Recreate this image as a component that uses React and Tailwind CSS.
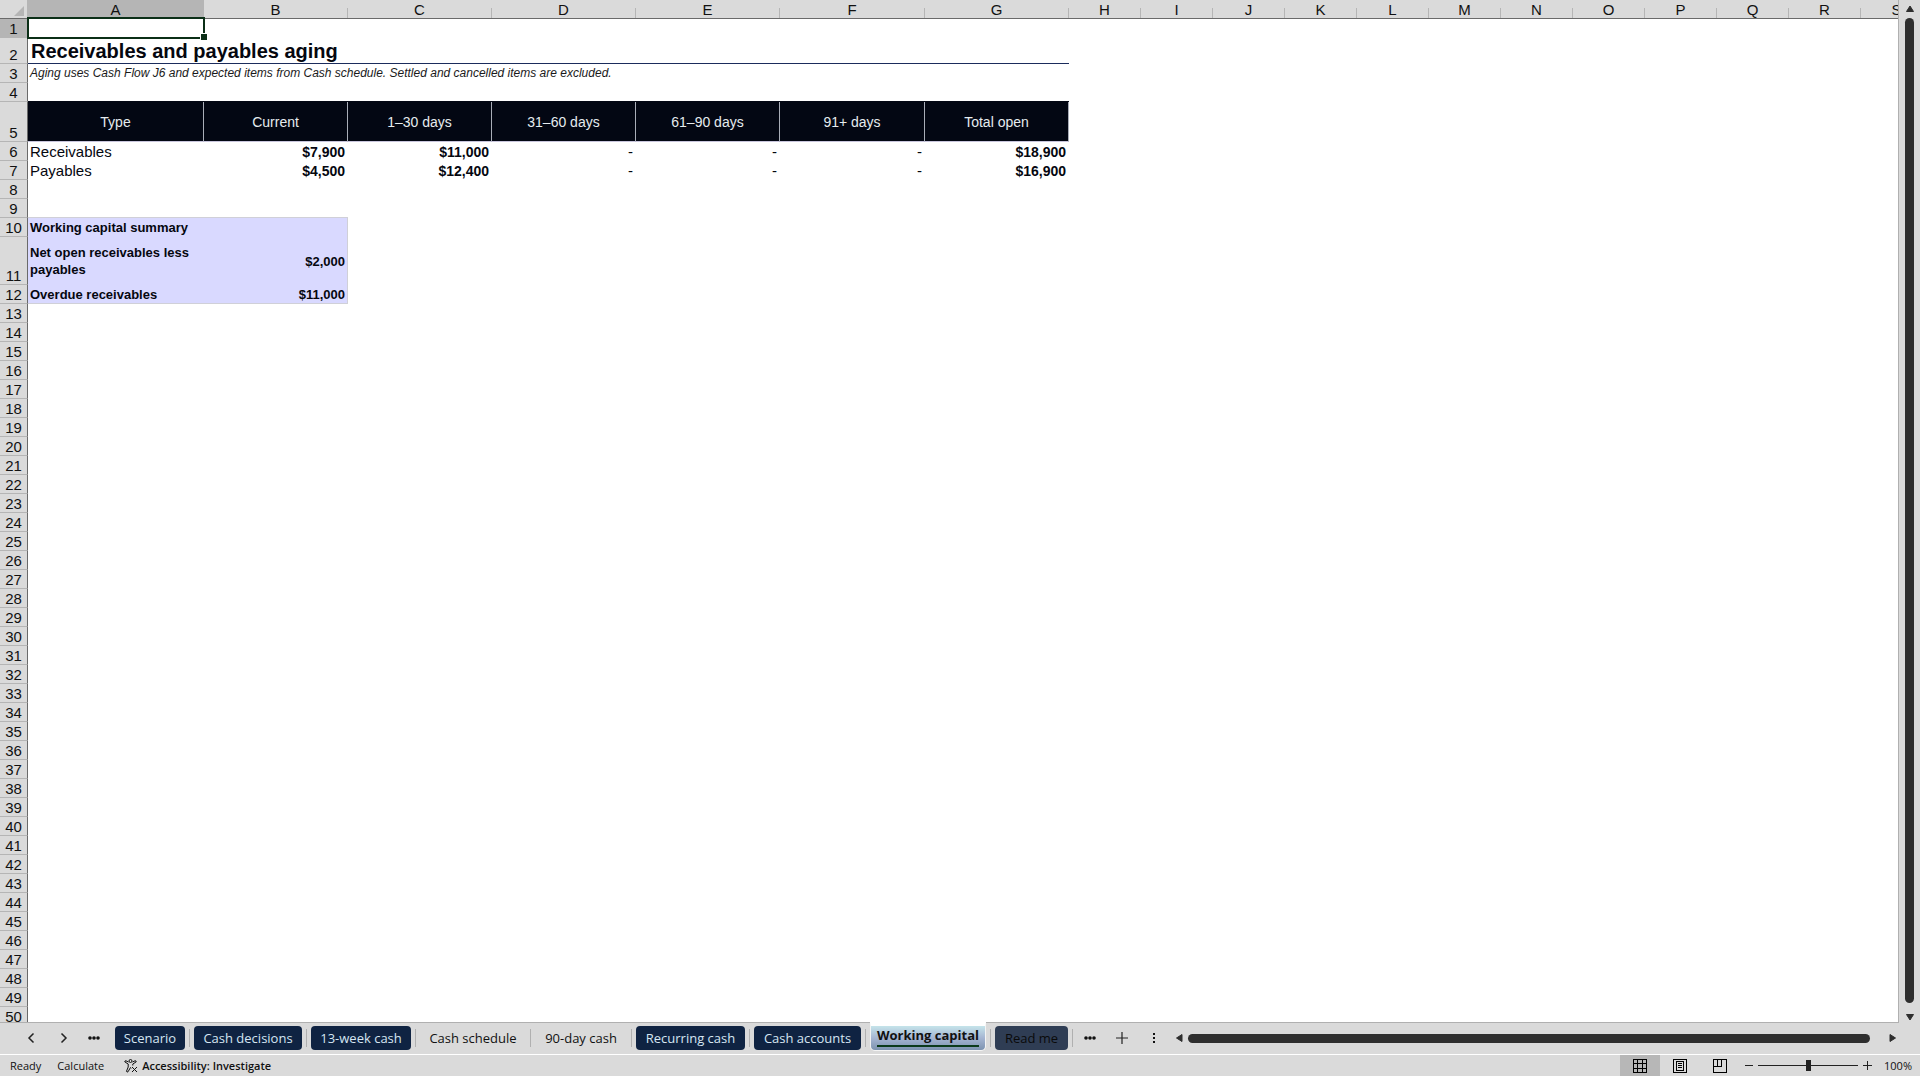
const rowHeaders = [];
for (let n = 13; n <= 50; n++) rowHeaders.push(n);

const columns = ["A", "B", "C", "D", "E", "F", "G", "H", "I", "J", "K", "L", "M", "N", "O", "P", "Q", "R", "S"];
const buckets = ["Type", "Current", "1–30 days", "31–60 days", "61–90 days", "91+ days", "Total open"];
const aging = [
  { n: 6, type: "Receivables", values: ["$7,900", "$11,000", "-", "-", "-", "$18,900"] },
  { n: 7, type: "Payables", values: ["$4,500", "$12,400", "-", "-", "-", "$16,900"] },
];

function RowHead({ n, active }) {
  return (
    <th
      scope="row"
      className={
        "overflow-hidden border-r border-b border-r-[#6a6a6a] border-b-[#b5b5b5] p-0 text-center align-bottom text-[15px] leading-4 font-normal text-[#111] " +
        (active ? "bg-[#b5b5b5]" : "bg-[#dadada]")
      }
    >
      {n}
    </th>
  );
}

function Sheet() {
  return (
    <div className="min-w-0 flex-1 overflow-hidden border-r border-b border-[#b0b0b0] bg-white">
      <table className="w-[1933px] table-fixed border-separate border-spacing-0 font-['Liberation_Sans',Arial,sans-serif] text-[#05070f]">
        <colgroup>
          <col className="w-7" />
          <col className="w-44" />
          <col span={4} className="w-36" />
          <col className="w-[145px]" />
          <col className="w-36" />
          <col span={12} className="w-[72px]" />
        </colgroup>
        <thead>
          <tr className="h-[19px] bg-[#dadada]">
            <th className="border-r border-b border-r-[#b5b5b5] border-b-[#6a6a6a] p-0" aria-label="Select all">
              <svg viewBox="0 0 10 10" className="mt-1 mr-[3px] ml-auto size-[10px]" fill="#b5b5b5">
                <path d="M10 0V10H0Z" />
              </svg>
            </th>
            {columns.map((c) => (
              <th
                key={c}
                scope="col"
                className={
                  "h-[19px] border-b border-[#6a6a6a] p-0 text-[15px] leading-4 font-normal text-[#111] " +
                  (c === "A" ? "bg-[#b5b5b5]" : "")
                }
              >
                <div className="flex h-[18px] items-end">
                  <span className="flex-1 text-center">{c}</span>
                  <span className="h-[10px] w-px bg-[#b5b5b5]" />
                </div>
              </th>
            ))}
          </tr>
        </thead>
        <tbody>
          <tr className="h-[19px]">
            <RowHead n={1} active />
            <td className="relative p-0">
              <div className="absolute -inset-x-px -top-0.5 -bottom-px border-2 border-[#0b2f17]">
                <span className="absolute -right-1 -bottom-[3px] size-[7px] border-t border-l border-white bg-[#0b2f17]" />
              </div>
            </td>
            <td colSpan={18} />
          </tr>
          <tr className="h-[26px]">
            <RowHead n={2} />
            <td colSpan={7} className="border-b border-[#1b2c5c] px-[3px] py-0 text-xl leading-6 font-bold">
              Receivables and payables aging
            </td>
            <td colSpan={12} />
          </tr>
          <tr className="h-[19px]">
            <RowHead n={3} />
            <td colSpan={7} className="px-[2px] py-0 align-top text-xs leading-[18px] text-[#1a1a1a] italic">
              Aging uses Cash Flow J6 and expected items from Cash schedule. Settled and cancelled items are excluded.
            </td>
            <td colSpan={12} />
          </tr>
          <tr className="h-[19px]">
            <RowHead n={4} />
            <td colSpan={7} className="border-b border-[#030713]" />
            <td colSpan={12} />
          </tr>
          <tr className="h-10">
            <RowHead n={5} />
            {buckets.map((b) => (
              <th
                key={b}
                scope="col"
                className="border-r border-b border-r-[#a9adb8] border-b-[#c9c6dd] bg-[#030713] p-0 text-sm leading-4 font-normal text-[#e6ecef]"
              >
                {b}
              </th>
            ))}
            <td colSpan={12} />
          </tr>
          {aging.map((r) => (
            <tr key={r.n} className="h-[19px]">
              <RowHead n={r.n} />
              <td className="px-[2px] py-0 text-[15px] leading-[18px]">{r.type}</td>
              {r.values.map((v, i) => (
                <td
                  key={i}
                  className={
                    "py-0 pr-[3px] pl-0 text-right " +
                    (v === "-" ? "text-[15px] leading-[18px]" : "text-sm leading-[18px] font-bold")
                  }
                >
                  {v}
                </td>
              ))}
              <td colSpan={12} />
            </tr>
          ))}
          <tr className="h-[19px]">
            <RowHead n={8} />
            <td colSpan={19} />
          </tr>
          <tr className="h-[19px]">
            <RowHead n={9} />
            <td colSpan={2} className="border-b border-[#d0d0d8]" />
            <td colSpan={17} />
          </tr>
          <tr className="h-[19px] text-[13px] leading-[17px] font-bold">
            <RowHead n={10} />
            <td className="bg-[#d9d9ff] px-[2px] py-0">Working capital summary</td>
            <td className="border-r border-[#d0d0d8] bg-[#d9d9ff]" />
            <td colSpan={17} />
          </tr>
          <tr className="h-12 text-[13px] leading-[17px] font-bold">
            <RowHead n={11} />
            <td className="bg-[#d9d9ff] px-[2px] py-0">Net open receivables less payables</td>
            <td className="border-r border-[#d0d0d8] bg-[#d9d9ff] px-[2px] py-0 text-right">$2,000</td>
            <td colSpan={17} />
          </tr>
          <tr className="h-[19px] text-[13px] leading-[17px] font-bold">
            <RowHead n={12} />
            <td className="border-b border-[#d0d0d8] bg-[#d9d9ff] px-[2px] py-0">Overdue receivables</td>
            <td className="border-r border-b border-[#d0d0d8] bg-[#d9d9ff] px-[2px] py-0 text-right">$11,000</td>
            <td colSpan={17} />
          </tr>
          {rowHeaders.map((n) => (
            <tr key={n} className="h-[19px]">
              <RowHead n={n} />
              <td colSpan={19} />
            </tr>
          ))}
        </tbody>
      </table>
    </div>
  );
}

function Arrow({ d, label }) {
  return (
    <button aria-label={label} className="flex shrink-0 items-center justify-center">
      <svg viewBox="0 0 10 10" className="size-[10px]" fill="#2e2e2e" stroke="#2e2e2e" strokeLinejoin="round">
        <path d={d} />
      </svg>
    </button>
  );
}

function Dots({ vertical }) {
  return (
    <svg viewBox="0 0 12 12" className="size-3" fill="#111">
      {vertical ? (
        <path d="M5 1h2v2H5zM5 5h2v2H5zM5 9h2v2H5z" />
      ) : (
        <g>
          <circle cx="2" cy="6" r="1.8" />
          <circle cx="6" cy="6" r="1.8" />
          <circle cx="10" cy="6" r="1.8" />
        </g>
      )}
    </svg>
  );
}

function Chevron({ d }) {
  return (
    <svg viewBox="0 0 8 12" className="h-3 w-2" fill="none" stroke="#222" strokeWidth="1.5">
      <path d={d} />
    </svg>
  );
}

const dark = "bg-[#0f2342] text-[#d6e6f2]";
const sheets = [
  { name: "Scenario", w: "w-[70px]", tone: dark },
  { name: "Cash decisions", w: "w-[108px]", tone: dark },
  { name: "13-week cash", w: "w-[100px]", tone: dark },
  { name: "Cash schedule", w: "w-[106px]", tone: "text-[#111]" },
  { name: "90-day cash", w: "w-[92px]", tone: "text-[#111]" },
  { name: "Recurring cash", w: "w-[109px]", tone: dark },
  { name: "Cash accounts", w: "w-[107px]", tone: dark },
];

function TabBar() {
  return (
    <div className="flex h-8 shrink-0 items-center border-b border-white bg-[#dadada] pb-px font-['Open_Sans','Noto_Sans',sans-serif]">
      <button aria-label="Previous sheet" className="ml-[26px] flex w-[9px] justify-center">
        <Chevron d="M6.500 1.500 2 6l4.500 4.500" />
      </button>
      <button aria-label="Next sheet" className="ml-6 flex w-[9px] justify-center">
        <Chevron d="M1.500 1.500 6 6l-4.500 4.500" />
      </button>
      <button aria-label="More sheets" className="ml-5 mr-[15px]">
        <Dots />
      </button>
      {sheets.map((s) => (
        <div key={s.name} className="flex items-center">
          <button className={"h-6 rounded-[4px] text-[13px] leading-6 whitespace-nowrap " + s.w + " " + s.tone}>{s.name}</button>
          <span className="mx-1 h-[18px] w-px bg-[#b0b0b0]" />
        </div>
      ))}
      <button
        aria-current="page"
        className="-mt-px flex h-[29px] w-[116px] items-start justify-center self-start rounded-b-[5px] border border-t-4 border-[#f4f4f4] border-t-white bg-linear-to-b from-[#c5e4ea] via-[#a5b5d2] to-[#7d93b0] text-[13px] leading-[18px] font-bold whitespace-nowrap text-[#111]"
      >
        <span className="h-[21px] border-b-2 border-[#0b3a1b]">Working capital</span>
      </button>
      <span className="mx-1 h-[18px] w-px bg-[#b0b0b0]" />
      <button className="h-6 w-[73px] rounded-[4px] bg-[#2f3d54] text-[13px] leading-6 whitespace-nowrap text-[#0a0a0a]">Read me</button>
      <span className="mx-1 h-[18px] w-px bg-[#b0b0b0]" />
      <button aria-label="All sheets" className="ml-[7px]">
        <Dots />
      </button>
      <button aria-label="New sheet" className="ml-5">
        <svg viewBox="0 0 12 12" className="size-3" stroke="#222" strokeWidth="1.200">
          <path d="M6 0V12M0 6H12" />
        </svg>
      </button>
      <button aria-label="Resize tabs" className="ml-5">
        <Dots vertical />
      </button>
      <div className="mr-[22px] ml-[14px] flex flex-1 items-center gap-1">
        <Arrow label="Scroll left" d="M8 1.500V8.500L2.500 5Z" />
        <div className="h-[9px] flex-1 rounded-full bg-[#2e2e2e]" />
        <div className="w-[10px]" />
        <Arrow label="Scroll right" d="M2 1.500V8.500L7.500 5Z" />
      </div>
    </div>
  );
}

function StatusBar() {
  return (
    <div className="flex h-[21px] shrink-0 items-center bg-[#dadada] font-['Open_Sans','Noto_Sans',sans-serif] text-[11px] leading-5 text-[#111]">
      <span className="ml-[10px]">Ready</span>
      <span className="ml-4">Calculate</span>
      <button className="ml-5 flex items-center gap-1 font-semibold">
        <svg viewBox="0 0 14 14" className="size-[14px]" fill="none" stroke="#111" strokeLinejoin="round">
          <circle cx="6.500" cy="2" r="1.500" />
          <path d="M4.500 3 2 1.800Q.6 1.600.8 2.900L4.200 5v3L2.500 12.200q.3 1.400 1.500.6L6.500 8.500l.8.800M8.500 3l2.500-1.200q1.400-.2 1.200 1.100L8.800 5v1.500M8 8l5 5M13 8l-5 5" />
        </svg>
        Accessibility: Investigate
      </button>
      <div className="flex-1" />
      <button aria-label="Normal view" className="flex h-full w-10 items-center justify-center bg-[#b7b7b7]">
        <svg viewBox="0 0 14 14" className="size-[14px]" fill="none" stroke="#000" shapeRendering="crispEdges">
          <path d="M.5.5h13v13H.5zM4.500.5v13M9.500.5v13M.5 4.500h13M.5 9.500h13" />
        </svg>
      </button>
      <button aria-label="Page layout" className="flex h-full w-10 items-center justify-center">
        <svg viewBox="0 0 14 14" className="size-[14px]" fill="none" stroke="#000" shapeRendering="crispEdges">
          <path d="M.5.5h13v13H.5zM3.500 2.500h7v9h-7zM5 4.500h4M5 6.500h4M5 8.500h4" />
        </svg>
      </button>
      <button aria-label="Page break preview" className="flex h-full w-10 items-center justify-center">
        <svg viewBox="0 0 14 14" className="size-[14px]" fill="none" stroke="#000" shapeRendering="crispEdges">
          <path d="M.5.5h13v13H.5zM4.500.5v7M8.500.5v7M.5 7.500h8.500" />
        </svg>
      </button>
      <button aria-label="Zoom out" className="ml-[5px] h-px w-2 bg-[#222]" />
      <input
        type="range"
        aria-label="Zoom"
        defaultValue={50}
        className="ml-[5px] h-3 w-[100px] appearance-none bg-transparent [&::-webkit-slider-runnable-track]:h-px [&::-webkit-slider-runnable-track]:bg-[#222] [&::-webkit-slider-thumb]:-mt-[5px] [&::-webkit-slider-thumb]:h-[11px] [&::-webkit-slider-thumb]:w-[5px] [&::-webkit-slider-thumb]:appearance-none [&::-webkit-slider-thumb]:bg-[#222]"
      />
      <button aria-label="Zoom in" className="ml-[5px]">
        <svg viewBox="0 0 9 9" className="size-[9px]" stroke="#222" shapeRendering="crispEdges">
          <path d="M4.500 0V9M0 4.500H9" />
        </svg>
      </button>
      <span className="mr-2 ml-3">100%</span>
    </div>
  );
}

export default function App() {
  return (
    <div className="flex h-screen flex-col overflow-hidden bg-[#dadada]">
      <div className="flex min-h-0 flex-1">
        <Sheet />
        <div className="flex w-[21px] shrink-0 flex-col items-center gap-1 pt-1 pb-px">
          <Arrow label="Scroll up" d="M5 2 8.500 7.500H1.500Z" />
          <div className="w-[9px] flex-1 rounded-full bg-[#2e2e2e]" />
          <div className="h-px" />
          <Arrow label="Scroll down" d="M5 8 8.500 2.500H1.500Z" />
        </div>
      </div>
      <TabBar />
      <StatusBar />
    </div>
  );
}
